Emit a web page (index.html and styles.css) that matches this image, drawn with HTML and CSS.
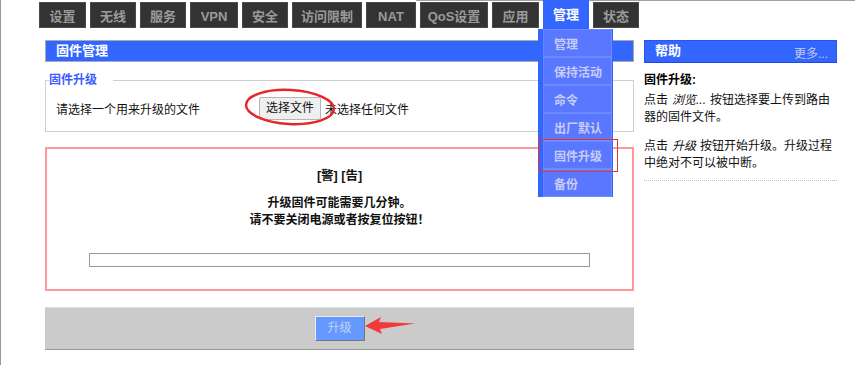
FILE: index.html
```html
<!DOCTYPE html>
<html lang="zh-CN">
<head>
<meta charset="utf-8">
<title>固件管理</title>
<link rel="stylesheet" href="styles.css">
</head>
<body>
<div class="page">
  <nav class="tabs">
    <a class="tab w47">设置</a>
    <a class="tab w46">无线</a>
    <a class="tab w46">服务</a>
    <a class="tab w48 latin">VPN</a>
    <a class="tab w46">安全</a>
    <a class="tab w70">访问限制</a>
    <a class="tab w50 latin">NAT</a>
    <a class="tab w68 latin">QoS设置</a>
    <a class="tab w47">应用</a>
    <div class="tab w46 active">管理
      <ul class="menu">
        <li>管理</li>
        <li>保持活动</li>
        <li>命令</li>
        <li>出厂默认</li>
        <li class="current">固件升级</li>
        <li>备份</li>
      </ul>
    </div>
    <a class="tab w46">状态</a>
  </nav>

  <div class="main">
    <section class="content">
      <h2 class="bar-title">固件管理</h2>
      <fieldset class="fs">
        <legend>固件升级</legend>
        <div class="file-row">
          <span class="file-label">请选择一个用来升级的文件</span>
          <span class="file-btn">选择文件</span>
          <span class="file-none">未选择任何文件</span>
        </div>
      </fieldset>
      <div class="warn">
        <div class="warn-title">[警] [告]</div>
        <p class="warn-text">升级固件可能需要几分钟。<br>请不要关闭电源或者按复位按钮！</p>
        <div class="progress"></div>
      </div>
      <div class="submit-bar">
        <span class="btn-upgrade">升级</span>
      </div>
    </section>

    <aside class="help">
      <div class="help-head"><span class="help-title">帮助</span><span class="help-more">更多...</span></div>
      <div class="help-body">
        <div class="help-h">固件升级:</div>
        <p class="help-p">点击<i>浏览...</i>按钮选择要上传到路由器的固件文件。</p>
        <p class="help-p second">点击<i>升级</i>按钮开始升级。升级过程中绝对不可以被中断。</p>
        <div class="help-rule"></div>
      </div>
    </aside>
  </div>

  <svg class="annot" width="855" height="365" viewBox="0 0 855 365">
    <ellipse cx="290" cy="107" rx="44" ry="17" transform="rotate(3 290 107)" fill="none" stroke="#e6262b" stroke-width="2.5"/>
    <polygon points="365,326 381,317 379,322 415,323.5 380,329 382,334" fill="#f23a3a"/>
  </svg>
</div>
</body>
</html>
```
FILE: styles.css
```css
* { box-sizing: border-box; }
html, body { margin: 0; padding: 0; background: #fff; }
body {
  font-family: "Liberation Sans", "Noto Sans CJK SC", sans-serif;
  font-size: 12px;
  color: #111;
}
.page {
  position: relative;
  width: 855px;
  height: 365px;
  border-left: 1px solid #999;
  overflow: hidden;
}
.page::before {
  content: "";
  position: absolute;
  left: 415px;
  right: 0;
  top: 0;
  height: 1px;
  background: #a0a0a0;
}

/* tabs */
.tabs {
  display: flex;
  align-items: flex-start;
  gap: 4px;
  padding: 2px 0 0 38px;
  height: 40px;
}
.tab {
  position: relative;
  height: 26px;
  line-height: 25px;
  padding-top: 1px;
  text-align: center;
  background: #333;
  border: 1px solid #4a4a4a;
  color: #9a9a9a;
  font-weight: bold;
  font-size: 13px;
  text-decoration: none;
}
.w46 { width: 46px; }
.w47 { width: 47px; }
.w48 { width: 48px; }
.w50 { width: 50px; }
.w68 { width: 68px; }
.w70 { width: 70px; }
.tab.active {
  margin-top: -2px;
  height: 29px;
  line-height: 28px;
  padding-top: 0;
  background: #3366ff;
  border-color: #3366ff;
  color: #fff;
  z-index: 5;
}
.menu {
  position: absolute;
  left: -6px;
  top: 28px;
  width: 75px;
  margin: 0;
  padding: 0 1px 0 5px;
  list-style: none;
  background: #3366ff;
  text-align: left;
}
.menu li {
  height: 28px;
  line-height: 22px;
  padding: 4px 0 0 10px;
  background: #5a78ff;
  border: 1px solid #6d8aff;
  border-left-color: #6583ff;
  color: #c9ccf6;
  font-size: 12px;
  font-weight: bold;
}
.menu li.current { position: relative; }
.menu li.current::after {
  content: "";
  position: absolute;
  left: -5px;
  top: -3px;
  width: 77px;
  height: 31px;
  border: 1px solid #e53333;
}

/* main layout */
.main {
  display: grid;
  grid-template-columns: 589px 193px;
  column-gap: 10px;
  padding-left: 44px;
}

.bar-title {
  margin: 0;
  height: 22px;
  line-height: 20px;
  padding-left: 10px;
  background: #3366ff;
  border: 1px solid #aaa;
  color: #fff;
  font-size: 13px;
  font-weight: bold;
}

.fs {
  margin: 10px 0 0 0;
  padding: 9px 10px 10px 10px;
  border: 1px solid #cfcfcf;
  height: 60px;
}
.fs legend {
  margin-left: -7px;
  padding: 0 16px 0 0;
  line-height: 16px;
  color: #3d5cff;
  font-weight: bold;
  font-size: 12px;
}
.file-row {
  display: flex;
  align-items: center;
  height: 23px;
}
.file-label { width: 203px; }
.file-btn {
  width: 62px;
  height: 23px;
  line-height: 21px;
  text-align: center;
  background: #efefef;
  border: 1px solid #b5b5b5;
  border-radius: 2px;
}
.file-none { margin-left: 4px; }

.warn {
  margin-top: 15px;
  height: 144px;
  border: 2px solid #ff9999;
  padding-top: 19px;
  text-align: center;
  font-weight: bold;
}
.warn-title { line-height: 17px; font-size: 12.5px; }
.warn-text {
  margin: 10px 0 0;
  line-height: 17px;
}
.progress {
  width: 501px;
  height: 14px;
  margin: 24px auto 0;
  border: 1px solid #999;
  background: #fff;
}

.submit-bar {
  margin-top: 16px;
  height: 43px;
  display: flex;
  align-items: center;
  justify-content: center;
  background: #cbcbcb;
  border-top: 1px solid #ddd;
  border-bottom: 1px solid #999;
}
.btn-upgrade {
  width: 50px;
  height: 25px;
  line-height: 23px;
  text-align: center;
  background: #6699ff;
  color: #c6d2f2;
  border: 1px solid;
  border-color: #eaeaea #777 #777 #eaeaea;
  font-size: 12px;
}

/* help */
.help-head {
  display: flex;
  justify-content: space-between;
  align-items: flex-end;
  height: 23px;
  padding: 0 8px 1px 10px;
  background: #3366ff;
  border: 1px solid #2c55f0;
  border-bottom-color: #2245e6;
}
.help-title {
  align-self: center;
  color: #fff;
  font-weight: bold;
  font-size: 13px;
  line-height: 16px;
}
.help-more {
  color: #c3cbe9;
  font-size: 12px;
  line-height: 14px;
}
.help-body { padding-top: 9px; }
.help-h {
  font-weight: bold;
  line-height: 17px;
  color: #000;
}
.help-p {
  margin: 3px 0 0;
  line-height: 17px;
  color: #111;
}
.help-p.second { margin-top: 12px; }
.help-p i {
  display: inline-block;
  font-style: italic;
  line-height: 17px;
  height: 17px;
  margin: 0 4px;
  vertical-align: top;
}
.help-rule {
  margin-top: 8px;
  border-top: 1px dotted #bbb;
}

.annot {
  position: absolute;
  left: -1px;
  top: 0;
  pointer-events: none;
  z-index: 10;
}
```
